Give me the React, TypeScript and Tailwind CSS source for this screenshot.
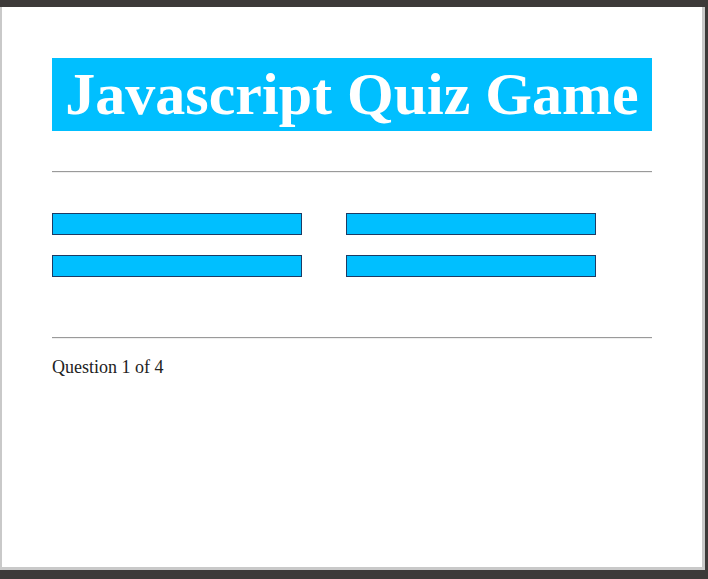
export default function App() {
  const answers = ["", "", "", ""];

  return (
    <div className="h-[579px] w-[708px] bg-[#3d3a39] pt-[7px] pr-[3px] pb-[9px]">
      <div className="h-full border-x-[3px] border-b-[3px] border-l-[2px] border-[#c9c9c9] bg-white pl-[50px] pt-[51px] font-['Liberation_Serif',serif]">
        {/* Title */}
        <h1 className="w-[600px] bg-[#00bfff] text-center text-[60px] font-bold leading-[73px] text-white">
          Javascript Quiz Game
        </h1>

        <hr className="mt-[40px] w-[600px] border-t border-b border-t-[#9a9a9a] border-b-[#efefef]" />

        {/* Answer buttons */}
        <div className="mt-[40px] grid w-[544px] grid-cols-2 gap-x-[44px] gap-y-[20px]">
          {answers.map((a, i) => (
            <button
              key={i}
              className="h-[22px] w-[250px] border border-[#1d3b64] bg-[#00bfff]"
            >
              {a}
            </button>
          ))}
        </div>

        <hr className="mt-[60px] w-[600px] border-t border-b border-t-[#9a9a9a] border-b-[#efefef]" />

        <p className="mt-[18px] text-[18px] leading-[20px] text-[#222]">Question 1 of 4</p>
      </div>
    </div>
  );
}
